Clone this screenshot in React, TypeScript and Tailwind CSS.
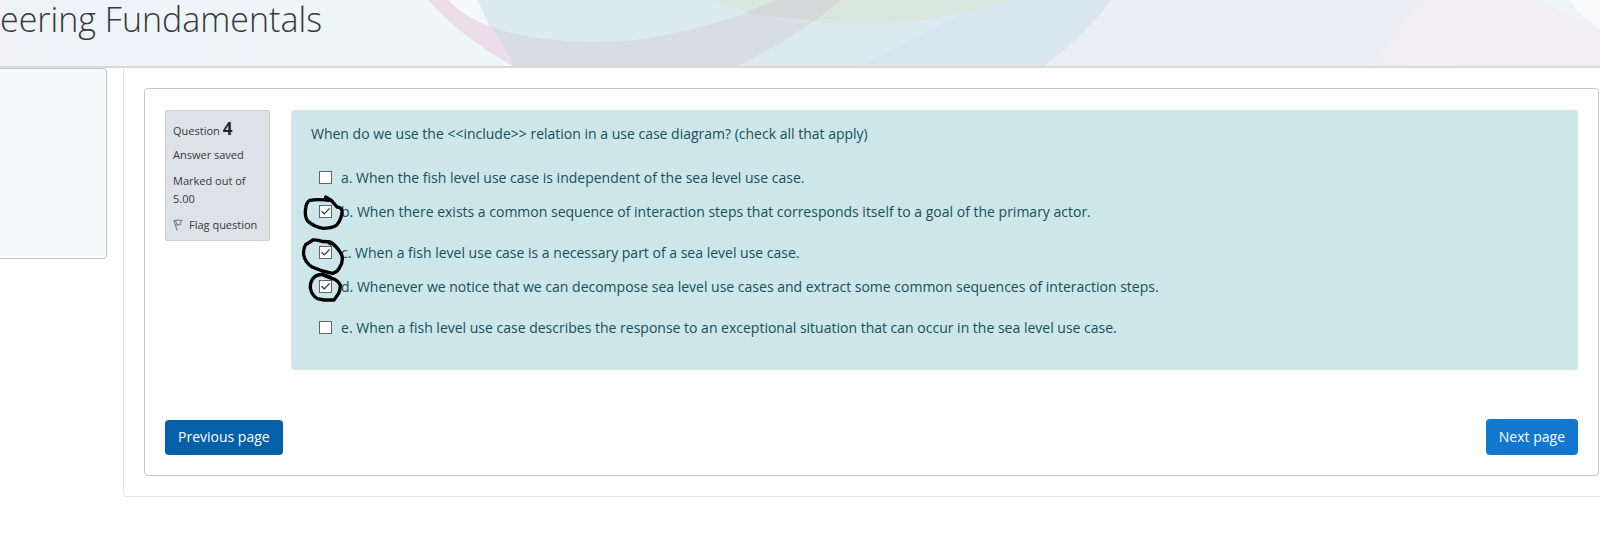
const options = [
  { id: 'a', checked: false, text: 'When the fish level use case is independent of the sea level use case.' },
  { id: 'b', checked: true, text: 'When there exists a common sequence of interaction steps that corresponds itself to a goal of the primary actor.' },
  { id: 'c', checked: true, text: 'When a fish level use case is a necessary part of a sea level use case.' },
  { id: 'd', checked: true, text: 'Whenever we notice that we can decompose sea level use cases and extract some common sequences of interaction steps.' },
  { id: 'e', checked: false, text: 'When a fish level use case describes the response to an exceptional situation that can occur in the sea level use case.' },
];

function Banner() {
  return (
    <svg className="absolute inset-0 h-full w-full" viewBox="0 0 1600 66" preserveAspectRatio="xMidYMid slice" aria-hidden="true">
      <defs>
        <linearGradient id="base" x1="0" x2="1">
          <stop offset="0" stopColor="#eef2f6" />
          <stop offset="0.05" stopColor="#edf3f6" />
          <stop offset="0.3" stopColor="#eff6f8" />
        </linearGradient>
        <linearGradient id="right" x1="0" x2="1">
          <stop offset="0" stopColor="#edeef4" />
          <stop offset="0.4" stopColor="#ebeef3" />
          <stop offset="1" stopColor="#f0eff4" />
        </linearGradient>
      </defs>
      <rect width="1600" height="66" fill="url(#base)" />
      <path d="M0 0H4Q10 40 22 66H0Z" fill="#f1f0f5" />
      <path d="M440 0H480L492 27Q464 16 448 0Z" fill="#f5f9f9" />
      <path d="M478 0H1111Q1085 35 1044 66H513Q496 44 478 0Z" fill="#daeaf0" />
      <path d="M478 0H830Q760 28 650 40Q550 47 492 27Z" fill="#dcebef" />
      <path d="M1111 0H1600V66H1044Q1085 35 1111 0Z" fill="url(#right)" />
      <path d="M860 66Q930 30 990 0H1111Q1085 35 1044 66Z" fill="#d8e7ef" />
      <path d="M428 0H448Q464 17 491 27L513 66Q462 38 428 0Z" fill="#eddde9" />
      <path d="M491 27Q550 47 635 40Q720 27 778 0H841Q800 35 738 66H513Q506 48 491 27Z" fill="#d8dce7" />
      <path d="M711 0H1010Q930 25 860 24Q770 24 711 0Z" fill="#d8e8de" />
      <path d="M778 0H841L815 21Q780 19 745 12Z" fill="#d4d8d9" />
      <path d="M1370 66L1420 0H1535L1600 30V66Z" fill="#f1eff4" opacity="0.6" />
      <path d="M1535 0H1570L1590 24Q1562 12 1535 0Z" fill="#edf4f6" />
      <path d="M1570 0H1600V30Q1582 18 1570 0Z" fill="#fafafa" />
    </svg>
  );
}

function Checkbox({ id, checked }: { id: string; checked: boolean }) {
  return (
    <span className="relative mb-[2px] block size-[13px] shrink-0">
      <input
        id={id}
        type="checkbox"
        defaultChecked={checked}
        className="peer block size-[13px] appearance-none border border-[#5c6669] bg-white"
      />
      <svg viewBox="0 0 13 13" className="pointer-events-none invisible absolute inset-0 size-[13px] peer-checked:visible" aria-hidden="true">
        <path d="M2.6 6.2 5.2 8.9 10.6 3.4" fill="none" stroke="#333" strokeWidth="1.3" />
      </svg>
    </span>
  );
}

function PenMarks() {
  return (
    <svg
      className="pointer-events-none absolute left-0 top-0 h-[200px] w-[60px]"
      viewBox="3 0 180 600"
      fill="none"
      stroke="#000"
      strokeWidth="10"
      strokeLinecap="round"
      strokeLinejoin="round"
      aria-hidden="true"
    >
      <path d="M107 261 124 271 141 291Q158 292 156 310Q151 334 139 346Q123 355 100 355Q72 351 53 333Q45 323 46 302Q48 276 60 271Q84 266 124 272" />
      <path d="M121 401Q115 394 99 395Q82 389 69 390L47 404Q39 414 41 434Q45 458 68 472Q98 486 128 490Q142 486 148 474Q160 458 156 438Q146 413 121 396L101 394" />
      <path d="M122 502 100 494Q83 491 71 503Q60 516 61 534Q65 556 82 566L102 570H132L146 550Q151 539 151 526Q143 509 125 505Q108 500 95 493" />
    </svg>
  );
}

export default function App() {
  return (
    <div className="min-h-screen overflow-x-hidden bg-white font-['Open_Sans','Noto_Sans',sans-serif] text-[#212529]">
      <header className="relative h-[68px] border-b-2 border-[#d6dadd]">
        <Banner />
        <h1 className="relative whitespace-nowrap text-[34px] font-light leading-[38px] text-[#343a40]">
          eering Fundamentals
        </h1>
      </header>

      <div className="flex items-start">
        <aside className="h-[191px] w-[107px] shrink-0 rounded-r border-b border-r border-t border-[#c4c8cb] bg-[#f8f9fb]" />

        <main className="-mr-5 ml-4 min-w-0 flex-1 rounded-b border border-t-0 border-[#e4e6e8] p-5">
          <form className="rounded border border-[#c6c8ca] p-5 pt-[21px]" onSubmit={(e) => e.preventDefault()}>
            <div className="flex items-start">
              <section className="flex w-[105px] shrink-0 flex-col rounded-xs border border-[#cad0d6] bg-[#dee2e6] px-[7px] pb-[6px] pt-[7px] text-[11px] leading-[18px] text-[#343a40]">
                <h2 className="whitespace-nowrap leading-[22px]">
                  <span>Question </span>
                  <span className="text-[17px] font-bold text-[#212529]">4</span>
                </h2>
                <p className="mt-1">Answer saved</p>
                <p className="mt-2">Marked out of 5.00</p>
                <a href="#flag" className="mt-2 flex items-center gap-[6px] whitespace-nowrap">
                  <svg viewBox="0 0 10 12" className="h-3 w-[10px] shrink-0" fill="none" stroke="#6b7278" aria-hidden="true">
                    <path d="M.8 1 4 11.5M1.2 1.8Q4 .4 9 1.6L7 4.2 7.6 5.6 3.2 6.2M2.4 1.4 4.4 6" />
                  </svg>
                  Flag question
                </a>
              </section>

              <section className="relative ml-[21px] min-w-0 flex-1 rounded bg-[#cde6e9] px-5 pb-[30px] pt-3 text-[14px] leading-6 text-[#17505a]">
                <p>When do we use the &lt;&lt;include&gt;&gt; relation in a use case diagram? (check all that apply)</p>
                <div className="mt-5 flex flex-col gap-[17px] pl-2">
                  {[options.slice(0, 2), options.slice(2, 4), options.slice(4)].map((group) => (
                    <div key={group[0].id} className="flex flex-col gap-[10px]">
                      {group.map((o) => (
                        <div key={o.id} className="flex items-center gap-[9px]">
                          <Checkbox id={'answer-' + o.id} checked={o.checked} />
                          <label htmlFor={'answer-' + o.id}>
                            {o.id}. {o.text}
                          </label>
                        </div>
                      ))}
                    </div>
                  ))}
                </div>
                <PenMarks />
              </section>
            </div>

            <div className="mt-[49px] flex items-center justify-between text-[14px] leading-[22px] text-white">
              <button type="button" className="h-[35px] rounded bg-[#0560a8] px-[13px]">Previous page</button>
              <button type="submit" className="h-9 rounded bg-[#1177d1] px-[13px]">Next page</button>
            </div>
          </form>
        </main>
      </div>
    </div>
  );
}
